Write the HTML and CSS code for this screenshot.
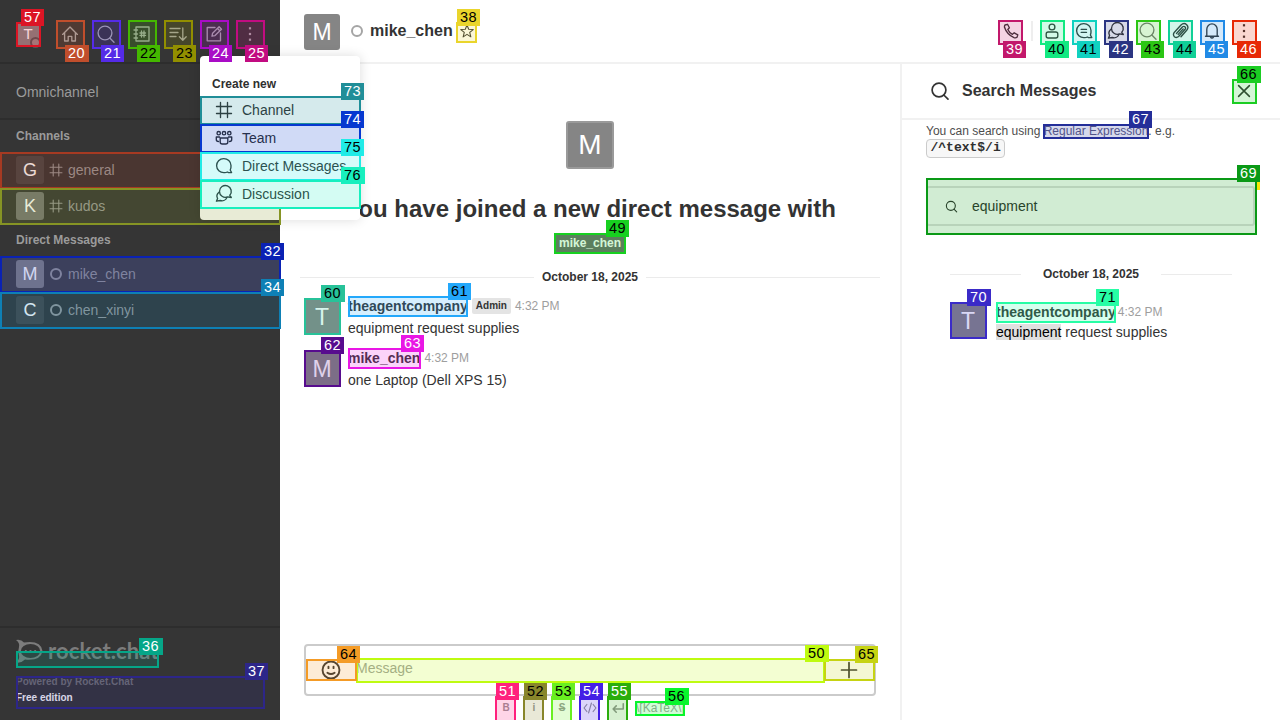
FILE: index.html
```
<!DOCTYPE html>
<html lang="en">
<head>
<meta charset="utf-8">
<title>Rocket.Chat</title>
<link rel="stylesheet" href="styles.css">
</head>
<body>
<svg class="defs" xmlns="http://www.w3.org/2000/svg">
  <symbol id="hash" viewBox="0 0 20 20"><path d="M6.5 2.5v15M13.5 2.5v15M2.5 6.5h15M2.5 13.5h15"/></symbol>
  <symbol id="search" viewBox="0 0 20 20"><circle cx="9" cy="9" r="6.9"/><path d="M13.8 14l4.2 4.2"/></symbol>
  <symbol id="home" viewBox="0 0 20 20"><path d="M2.6 10.4 10 3l7.400 7.400M4.6 9v8h3.600v-4.600h3.600V17h3.600V9"/></symbol>
  <symbol id="book" viewBox="0 0 20 20"><path d="M4 3h13v14H4zM2 6h3.500M2 10h3.500M2 14h3.500M9.500 7v6M12 7v6M8 9h5.500M8 11.400h5.500"/></symbol>
  <symbol id="sort" viewBox="0 0 20 20"><path d="M2 4.500h10M2 8.500h8M2 12.500h6M14.800 4v12M11.400 12.800l3.400 3.400 3.400-3.400"/></symbol>
  <symbol id="edit" viewBox="0 0 20 20"><path d="M11 3.500H3.200v13.300h13.300V9M8 12.200l.6-3 6.500-6.400 2.400 2.400-6.500 6.400zM13.500 4.500l2.300 2.300"/></symbol>
  <symbol id="dots" viewBox="0 0 20 20"><g class="solid"><rect x="8.900" y="3.200" width="2.200" height="2.200"/><rect x="8.900" y="8.900" width="2.200" height="2.200"/><rect x="8.900" y="14.600" width="2.200" height="2.200"/></g></symbol>
  <symbol id="team" viewBox="0 0 20 20"><circle cx="4.700" cy="5.200" r="1.700"/><circle cx="10" cy="5.200" r="1.700"/><circle cx="15.300" cy="5.200" r="1.700"/><path d="M6.200 10h7.600v4q0 2-2 2H8.200q-2 0-2-2zM5.500 9H2.300v2.500q0 2 2.200 2M14.500 9h3.200v2.500q0 2-2.200 2"/></symbol>
  <symbol id="balloon" viewBox="0 0 20 20"><path d="M14.600 16.600H17.600L16.200 14Q17.200 12 17 9.500A7.200 7 0 1 0 10 16.600Q12 16.800 13.300 16z"/></symbol>
  <symbol id="discussion" viewBox="0 0 20 20"><path d="M15.800 11.300A5.900 5.900 0 1 0 13.500 12.900L17.300 13.500zM5 8.200A5 5 0 0 0 3.600 14.500L2.400 17.200l3.800-.7A5.500 5.500 0 0 0 13 13.200"/></symbol>
  <symbol id="thread" viewBox="0 0 20 20"><path d="M14.600 16.600H17.800L16.400 14Q17.200 12 17 9.500A7.200 7 0 1 0 10 16.600Q12 16.800 13.300 16zM7.200 8.400h5.300M7.200 11.400h5.300"/></symbol>
  <symbol id="phone" viewBox="0 0 20 20"><path d="M4 4 6.500 3.300l1.900 3.500-1.600 1.700q1.400 3.200 4.600 4.800l1.800-1.500 3.600 2.100-.8 2.400q-1.200 1-3 .4Q5.800 13.400 3.500 6.300 3.300 4.800 4 4z"/></symbol>
  <symbol id="person" viewBox="0 0 20 20"><circle cx="10" cy="6" r="2.900"/><rect x="4.200" y="11" width="11.600" height="6" rx="2"/></symbol>
  <symbol id="clip" viewBox="0 0 20 20"><path d="M6.500 12.500 12.600 5.800q1.500-1 2.500.2 1 1.200 0 2.300l-6.500 7.200q-2.200 1.800-4.200.2-1.800-2.100-.2-4.200L11 4q3-2.700 5.700-.3 2.500 2.700 0 5.500L11 15.800M8.200 13.400l5-5.500"/></symbol>
  <symbol id="bell" viewBox="0 0 20 20"><path d="M3.500 15.200h13M4.800 15V8.200a5.200 5.300 0 0 1 10.400 0V15M8.300 15.600q1.700 3 3.400 0"/></symbol>
  <symbol id="cross" viewBox="0 0 20 20"><path d="M4 4l12 12M16 4L4 16"/></symbol>
  <symbol id="star" viewBox="0 0 20 20"><path d="M10 2.500l2.100 5.300 5.700.4-4.400 3.600 1.400 5.500-4.800-3.100-4.800 3.100 1.400-5.500-4.400-3.600 5.700-.4z"/></symbol>
  <symbol id="smile" viewBox="0 0 20 20"><circle cx="10" cy="10" r="7.700"/><path d="M6.700 12.500q3.300 2.400 6.600 0M7.700 6.900v1.400M12.300 6.900v1.400"/></symbol>
  <symbol id="plus" viewBox="0 0 20 20"><path d="M10 2.500v15M2.500 10h15"/></symbol>
  <symbol id="code" viewBox="0 0 20 20"><path d="M5.500 5 1.500 10l4 5M14.500 5l4 5-4 5M12 3 8 17"/></symbol>
  <symbol id="enter" viewBox="0 0 20 20"><path d="M17.500 4v7.500H3M7.500 7 3 11.500 7.500 16"/></symbol>
</svg>

<div class="app">
  <aside class="sidebar">
    <div class="side-top">
      <div class="avatar me">T<i class="me-status"></i></div>
      <svg class="ico"><use href="#home"/></svg>
      <svg class="ico"><use href="#search"/></svg>
      <svg class="ico"><use href="#book"/></svg>
      <svg class="ico"><use href="#sort"/></svg>
      <svg class="ico"><use href="#edit"/></svg>
      <svg class="ico"><use href="#dots"/></svg>
    </div>
    <div class="omni">Omnichannel</div>
    <div class="group">Channels</div>
    <div class="item"><span class="avatar a28 dark">G</span><svg class="ico s16"><use href="#hash"/></svg>general</div>
    <div class="item"><span class="avatar a28 olive">K</span><svg class="ico s16"><use href="#hash"/></svg>kudos</div>
    <div class="group">Direct Messages</div>
    <div class="item selected"><span class="avatar a28">M</span><i class="status"></i>mike_chen</div>
    <div class="item"><span class="avatar a28 dark">C</span><i class="status"></i>chen_xinyi</div>
    <footer class="side-foot">
      <div class="logo">
        <svg class="rocket" viewBox="0 0 27 25"><path class="body" d="M0 1Q5 0 8 3.500 25 1 26.500 12 25 22 9 20.500 5 24.500 0 23.500 4 20 3 16.500 1.500 12 3 8 4 4 0 1z"/><ellipse class="hole" cx="14.500" cy="12" rx="9.700" ry="6.900"/><g class="body"><circle cx="9.800" cy="12" r="1.100"/><circle cx="14.500" cy="12" r="1.100"/><circle cx="19.200" cy="12" r="1.100"/></g></svg>
        <span class="wordmark">rocket.chat</span>
      </div>
      <div class="powered">Powered by Rocket.Chat</div>
      <div class="edition">Free edition</div>
    </footer>
    <div class="menu">
      <div class="menu-title">Create new</div>
      <div class="menu-row"><svg class="ico s20"><use href="#hash"/></svg>Channel</div>
      <div class="menu-row"><svg class="ico s20"><use href="#team"/></svg>Team</div>
      <div class="menu-row"><svg class="ico s20"><use href="#balloon"/></svg>Direct Messages</div>
      <div class="menu-row"><svg class="ico s20"><use href="#discussion"/></svg>Discussion</div>
    </div>
  </aside>

  <section class="main">
    <header class="topbar">
      <span class="avatar a36">M</span><i class="status big"></i><b class="room-name">mike_chen</b><svg class="ico s16 star"><use href="#star"/></svg>
      <div class="actions">
        <svg class="ico s20"><use href="#phone"/></svg><i class="sep"></i>
        <svg class="ico s20"><use href="#person"/></svg>
        <svg class="ico s20"><use href="#thread"/></svg>
        <svg class="ico s20"><use href="#discussion"/></svg>
        <svg class="ico s20 faded"><use href="#search"/></svg>
        <svg class="ico s20"><use href="#clip"/></svg>
        <svg class="ico s20"><use href="#bell"/></svg>
        <svg class="ico s20"><use href="#dots"/></svg>
      </div>
    </header>
    <div class="content">
      <main class="room">
        <span class="avatar a48">M</span>
        <h1 class="intro">You have joined a new direct message with</h1>
        <span class="user-tag">mike_chen</span>
        <div class="date"><span>October 18, 2025</span></div>
        <article class="msg">
          <span class="avatar a36">T</span>
          <div><div class="meta"><b>theagentcompany</b><em class="role">Admin</em><time>4:32 PM</time></div><div class="text">equipment request supplies</div></div>
        </article>
        <article class="msg">
          <span class="avatar a36">M</span>
          <div><div class="meta"><b>mike_chen</b><time>4:32 PM</time></div><div class="text">one Laptop (Dell XPS 15)</div></div>
        </article>
        <div class="composer"><svg class="ico s22 heavy"><use href="#smile"/></svg><span class="placeholder">Message</span><svg class="ico s20 heavy"><use href="#plus"/></svg></div>
        <div class="tools"><span class="tool bold">B</span><span class="tool bold">i</span><span class="tool bold strike">S</span><span class="tool"><svg class="ico s14 heavy"><use href="#code"/></svg></span><span class="tool"><svg class="ico s14 heavier"><use href="#enter"/></svg></span><span class="katex">\[KaTeX\]</span></div>
      </main>
      <aside class="panel">
        <div class="panel-head"><svg class="ico s20 heavy"><use href="#search"/></svg><b>Search Messages</b><svg class="ico s18 heavy"><use href="#cross"/></svg></div>
        <div class="hint">You can search using <span class="regex">Regular Expression</span>. e.g.<br><code>/^text$/i</code></div>
        <div class="field"><svg class="ico s12 heavy"><use href="#search"/></svg>equipment</div>
        <div class="date narrow"><span>October 18, 2025</span></div>
        <article class="msg result">
          <span class="avatar a36">T</span>
          <div><div class="meta"><b>theagentcompany</b><time>4:32 PM</time></div><div class="text"><mark>equipment</mark> request supplies</div></div>
        </article>
      </aside>
    </div>
  </section>
  <div class="marks" id="marks"></div>
</div>
<script src="marks.js"></script>
</body>
</html>
```
FILE: styles.css
```
* { box-sizing: border-box; }
body { margin: 0; font: 14px/20px "Liberation Sans", Arial, sans-serif; color: #333; background: #fff; }
.defs { position: absolute; width: 0; height: 0; }
.app { position: relative; width: 1280px; height: 720px; overflow: hidden; display: flex; }
.ico { width: 20px; height: 20px; flex: none; fill: none; stroke: currentColor; stroke-width: 1.35; stroke-linejoin: round; stroke-linecap: round; }
.heavy { stroke-width: 1.7; }
.heavier { stroke-width: 2.2; }
.solid { fill: currentColor; stroke: none; }
.s12 { width: 13px; height: 13px; }
.s14 { width: 14px; height: 14px; }
.s16 { width: 16px; height: 16px; }
.s18 { width: 18px; height: 18px; }
.s22 { width: 22px; height: 22px; }
.avatar { display: flex; align-items: center; justify-content: center; flex: none; color: #fff; background: #858585; border-radius: 3px; }
.a28 { width: 28px; height: 28px; font-size: 18px; }
.a36 { width: 36px; height: 36px; font-size: 23px; }
.a48 { width: 48px; height: 48px; font-size: 28px; border: 2px solid #9a9a9a; }
.dark { background: #474747; }
.olive { background: #757575; }

.sidebar { position: relative; z-index: 2; width: 280px; height: 720px; background: #353535; color: #9b9b9b; display: flex; flex-direction: column; }
.side-top { height: 64px; border-bottom: 2px solid #2d2d2d; padding: 6px 20px 0 16px; display: flex; align-items: center; gap: 16px; }
.side-top .ico { color: #aaa; }
.me { position: relative; width: 24px; height: 24px; font-size: 15px; margin-right: 4px; }
.me-status { position: absolute; right: -1px; bottom: -2px; width: 11px; height: 11px; border: 2px solid #555; border-radius: 50%; background: #9b8a8a; }
.omni { height: 56px; border-bottom: 2px solid #2d2d2d; padding: 18px 16px; }
.group { height: 32px; padding: 6px 16px; font-size: 12px; font-weight: bold; }
.item { height: 36px; padding-left: 16px; display: flex; align-items: center; gap: 4px; }
.item.selected { background: #484848; }
.status { width: 12px; height: 12px; margin: 0 2px; border: 2px solid #9b9b9b; border-radius: 50%; flex: none; }
.side-foot { margin-top: auto; height: 94px; border-top: 2px solid #2d2d2d; padding: 11px 16px 0; font-size: 10px; line-height: 16px; font-weight: bold; }
.logo { height: 26px; display: flex; color: #7c7c7c; gap: 5px; }
.rocket { width: 27px; height: 25px; flex: none; }
.body { fill: #7c7c7c; }
.hole { fill: #353535; }
.wordmark { font: bold 22px/24px Lato, sans-serif; letter-spacing: .1px; }
.powered { margin-top: 9px; color: #737373; }
.edition { color: #fff; }

.menu { position: absolute; left: 200px; top: 56px; width: 160px; height: 164px; background: #fff; color: #2f2f2f; border-radius: 4px; box-shadow: 0 0 12px rgba(0,0,0,.14); padding-top: 16px; }
.menu-title { height: 24px; padding: 2px 12px; font-size: 12px; font-weight: bold; }
.menu-row { height: 28px; padding-left: 14px; display: flex; align-items: center; gap: 8px; white-space: nowrap; }

.main { width: 1000px; display: flex; flex-direction: column; }
.topbar { height: 64px; border-bottom: 2px solid #f1f1f1; padding: 0 26px 0 24px; display: flex; align-items: center; }
.topbar .avatar { margin-top: 2px; }
.status.big { margin: 0 7px 0 11px; border-color: #a5a5a5; }
.room-name { font-size: 16px; }
.star { margin-left: 6px; }
.actions { margin-left: auto; display: flex; align-items: center; gap: 12px; }
.sep { width: 2px; height: 20px; background: #eee; margin: 0 -3px 0 -2px; }
.faded { opacity: .65; }
.content { height: 656px; display: flex; }
.room { width: 620px; padding: 57px 20px 0; display: flex; flex-direction: column; align-items: center; }
.intro { margin: 24px 0 0; font-size: 24px; line-height: 32px; white-space: nowrap; }
.user-tag { margin-top: 9px; height: 20px; padding: 0 4px; border-radius: 2px; background: #6c6c6c; color: #fff; font-size: 12px; font-weight: bold; line-height: 18px; }
.date { align-self: stretch; margin-top: 13px; height: 20px; display: flex; align-items: center; gap: 8px; font-size: 12px; font-weight: bold; }
.date::before, .date::after { content: ""; flex: 1; height: 1px; background: #ebebeb; }
.msg { align-self: stretch; height: 52px; padding: 8px 4px 0; margin-top: 2px; display: flex; gap: 8px; }
.msg + .msg { margin-top: 0; }
.msg .avatar { margin-top: 2px; }
.meta { height: 20px; margin-top: -1px; display: flex; align-items: center; }
.meta time { margin-left: 4px; font-size: 12px; color: #9e9e9e; }
.role { margin-left: 4px; padding: 0 4px; height: 16px; border-radius: 2px; background: #e4e4e4; font: bold 10px/16px "Liberation Sans", sans-serif; }
.text { margin-top: 2px; }
.composer { align-self: stretch; margin: auto 4px 0; height: 52px; flex: none; border: 2px solid #cbcbcb; border-radius: 4px; display: flex; align-items: center; padding: 0 15px 0 14px; }
.placeholder { flex: 1; margin: -4px 0 0 14px; color: #9e9e9e; }
.tools { align-self: stretch; height: 24px; padding-left: 196px; display: flex; align-items: center; gap: 8px; color: #9e9e9e; }
.tool { width: 20px; height: 24px; display: flex; align-items: center; justify-content: center; font-size: 10px; color: #959595; }
.bold { font-weight: bold; }
.strike { text-decoration: line-through; }
.katex { font-size: 12px; width: 50px; overflow: hidden; }

.panel { width: 380px; border-left: 2px solid #f1f1f1; }
.panel-head { height: 56px; border-bottom: 2px solid #f1f1f1; padding: 0 27px 0 28px; display: flex; align-items: center; gap: 12px; font-size: 16px; }
.panel-head b { flex: 1; }
.hint { height: 58px; padding: 3px 24px 0; font-size: 12px; line-height: 16px; color: #4d4d4d; }
.regex { color: #5c5c86; }
.hint code { display: inline-block; padding: 0 3.5px; height: 19px; line-height: 16px; border: 1px solid #cbcbcb; border-radius: 4px; background: #f7f7f7; color: #2f2f2f; font-family: "Liberation Mono", monospace; font-size: 13px; font-weight: bold; }
.field { margin: 8px 24px 0; width: 329px; height: 40px; padding-left: 17px; border: 2px solid #e0e0e0; border-radius: 3px; display: flex; align-items: center; gap: 14px; color: #2f2f2f; }
.narrow { width: 282px; margin: 38px 0 0 48px; gap: 22px; }
.result { padding: 10px 0 0 48px; height: 64px; gap: 10px; }
.result .avatar { margin-top: 7px; }
.result .meta { margin-top: 6px; }
.result .meta time { margin-left: 2px; }
.result .text { margin-top: 0; }
mark { background: #dfdfdf; color: #000; }

.marks { position: absolute; inset: 0; z-index: 3; pointer-events: none; }
.frame { position: absolute; border: 2px solid; }
.tint { position: absolute; inset: 0; opacity: .19; }
.tag { position: absolute; height: 17px; padding-left: 3px; font: 14.5px/16px "Liberation Sans", Arial, sans-serif; letter-spacing: .4px; white-space: nowrap; }
.stepped { clip-path: polygon(0 0, 200px 0, 200px 21px, 100% 21px, 100% 100%, 0 100%); }
```
FILE: marks.js
```
// id, frame [x, y, width, height], tag [x, y, width], colour, tag text colour
const W = "#fff", K = "#000";
const marks = [
  ["", [0, 152, 202, 37], null, "#a63a22", W],
  ["", [0, 188, 281, 37], null, "#869424", W, "stepped"],
  ["20", [56, 20, 29, 29], [65, 45, 24], "#c04e2c", W],
  ["21", [92, 20, 29, 29], [101, 45, 23], "#552be8", W],
  ["22", [128, 20, 29, 29], [137, 45, 23], "#44b800", K],
  ["23", [164, 20, 29, 29], [173, 45, 23], "#928f00", K],
  ["24", [200, 20, 29, 29], [209, 45, 23], "#a90cc6", W],
  ["25", [236, 20, 29, 29], [245, 45, 23], "#c20c81", W],
  ["57", [16, 22, 25, 25], [21, 9, 23], "#dc1525", W],
  ["32", [0, 256, 281, 37], [261, 243, 23], "#0a22b4", W],
  ["34", [0, 292, 281, 37], [261, 279, 23], "#0e80b5", W],
  ["36", [16, 651, 143, 17], [139, 638, 24], "#05a688", W],
  ["37", [16, 676, 249, 33], [245, 663, 23], "#2d2689", W],
  ["38", [456, 22, 21, 21], [457, 9, 23], "#ead52c", K],
  ["39", [998, 20, 25, 25], [1003, 41, 23], "#c2186b", W],
  ["40", [1040, 20, 25, 25], [1045, 41, 24], "#12e981", K],
  ["41", [1072, 20, 25, 25], [1077, 41, 23], "#10d1c0", K],
  ["42", [1104, 20, 25, 25], [1109, 41, 24], "#2b3582", W],
  ["43", [1136, 20, 25, 25], [1141, 41, 23], "#2cc614", K],
  ["44", [1168, 20, 25, 25], [1173, 41, 23], "#11d097", K],
  ["45", [1200, 20, 25, 25], [1205, 41, 23], "#218ae6", W],
  ["46", [1232, 20, 25, 25], [1237, 41, 24], "#e72906", W],
  ["49", [554, 233, 72, 21], [606, 220, 23], "#17d020", K],
  ["50", [356, 658, 469, 25], [805, 645, 24], "#befb10", K],
  ["51", [495, 696, 21, 26], [496, 683, 23], "#ff217d", W],
  ["52", [523, 696, 21, 26], [524, 683, 23], "#88862b", K],
  ["53", [551, 696, 21, 26], [552, 683, 23], "#69ef20", K],
  ["54", [579, 696, 21, 26], [580, 683, 23], "#4420e5", W],
  ["55", [607, 696, 21, 26], [608, 683, 23], "#2aad0c", W],
  ["56", [635, 701, 50, 15], [665, 688, 24], "#08f52c", K],
  ["60", [304, 298, 37, 37], [321, 285, 24], "#27c299", K],
  ["61", [348, 296, 120, 21], [448, 283, 23], "#23a8fb", K],
  ["62", [304, 350, 37, 37], [321, 337, 23], "#570c8e", W],
  ["63", [348, 348, 73, 21], [401, 335, 23], "#e917e5", W],
  ["64", [306, 659, 51, 22], [337, 646, 23], "#f49b26", K],
  ["65", [824, 659, 51, 22], [855, 646, 23], "#c6d313", K],
  ["66", [1232, 79, 25, 25], [1237, 66, 24], "#1bcd23", K],
  ["67", [1043, 124, 106, 15], [1129, 111, 23], "#242e99", W],
  ["", null, [1257, 173, 3], "#fbe606", K],
  ["69", [926, 178, 331, 57], [1237, 165, 23], "#0a9916", W],
  ["70", [950, 302, 37, 37], [967, 289, 24], "#3b2bc8", W],
  ["71", [996, 302, 120, 21], [1096, 289, 23], "#27fda5", K],
  ["73", [200, 96, 161, 29], [341, 83, 23], "#208e98", W],
  ["74", [200, 124, 161, 29], [341, 111, 23], "#0638d0", W],
  ["75", [200, 152, 161, 29], [341, 139, 23], "#20ebe7", K],
  ["76", [200, 180, 161, 29], [341, 167, 24], "#18efbe", K]
];
const layer = document.getElementById("marks");
for (const [id, frame, tag, colour, ink, extra] of marks) {
  if (frame) {
    const f = document.createElement("div");
    f.className = "frame " + (extra || "");
    f.style.cssText = `left:${frame[0]}px;top:${frame[1]}px;width:${frame[2]}px;height:${frame[3]}px;border-color:${colour}`;
    const t = document.createElement("div");
    t.className = "tint";
    t.style.background = colour;
    f.append(t);
    layer.append(f);
  }
}
for (const [id, frame, tag, colour, ink] of marks) {
  if (tag) {
    const l = document.createElement("div");
    l.className = "tag";
    l.style.cssText = `left:${tag[0]}px;top:${tag[1]}px;width:${tag[2]}px;background:${colour};color:${ink}`;
    if (tag[2] < 20) l.style.padding = "0";
    l.textContent = id;
    layer.append(l);
  }
}
```
